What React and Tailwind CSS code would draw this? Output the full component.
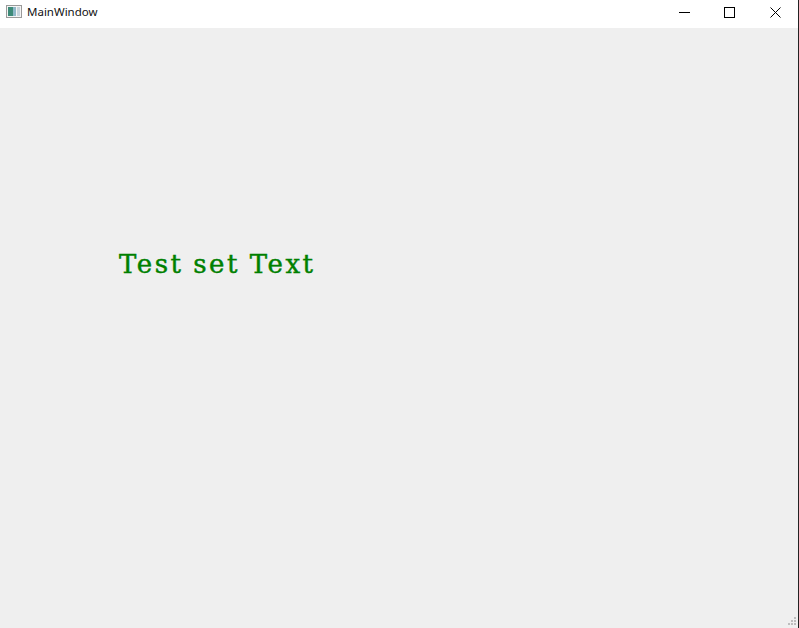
export default function App() {
  return (
    <div className="w-[799px] h-[628px] flex flex-col bg-[#efefef] overflow-hidden border-r border-[#222] font-['Liberation_Sans',sans-serif]">
      {/* title bar */}
      <div className="h-[28px] bg-white flex items-start shrink-0">
        <svg width="16" height="16" viewBox="0 0 16 16" className="ml-[6px] mt-[4px]">
          <rect x="0.5" y="1.5" width="15" height="12" fill="#f4f4f4" stroke="#9a9a9a" />
          <rect x="2" y="3" width="5" height="9" fill="#3d8a78" />
          <rect x="7" y="3" width="3" height="9" fill="#8fb8c8" />
          <rect x="11" y="3" width="3" height="9" fill="#c8d4dc" />
        </svg>
        <span className="ml-[5px] mt-[4px] text-[11.5px] leading-[16px] text-[#111] font-['Noto_Sans',sans-serif]">MainWindow</span>
        <div className="ml-auto flex items-center pt-[7px]">
          <svg width="11" height="11" viewBox="0 0 11 11" className="mr-[34px]">
            <path d="M0 5.5H11" stroke="#000" strokeWidth="1" />
          </svg>
          <svg width="11" height="11" viewBox="0 0 11 11" className="mr-[35px]">
            <rect x="0.5" y="0.5" width="10" height="10" fill="none" stroke="#000" />
          </svg>
          <svg width="11" height="11" viewBox="0 0 11 11" className="mr-[17px]">
            <path d="M0.5 0.5L10.5 10.5M10.5 0.5L0.5 10.5" stroke="#000" strokeWidth="1" />
          </svg>
        </div>
      </div>

      {/* central widget */}
      <div className="flex-1 relative pt-[221px] pl-[119px]">
        <p className="text-[26px] leading-[30px] tracking-[2.5px] [word-spacing:-1px] [-webkit-text-stroke:0.45px_#008000] text-[#008000] font-['DejaVu_Serif',serif]">Test set Text</p>
        <svg width="12" height="12" viewBox="0 0 12 12" className="absolute right-0 bottom-0">
          <path d="M8 1h2v2H8zM5 4h2v2H5zM8 4h2v2H8zM2 7h2v2H2zM5 7h2v2H5zM8 7h2v2H8z" fill="#bdbdbd" />
        </svg>
      </div>
    </div>
  );
}
